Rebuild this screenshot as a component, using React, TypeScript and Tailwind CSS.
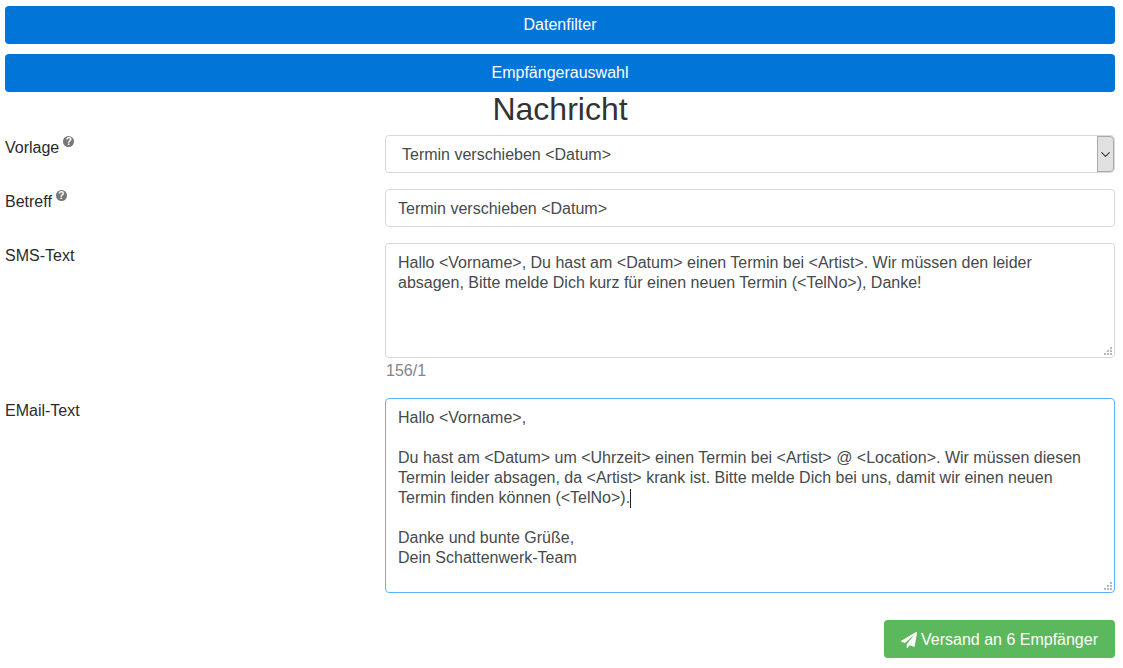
import { ChevronDown } from 'lucide-react';
import type { ReactNode } from 'react';

const SMS_TEXT =
  'Hallo <Vorname>, Du hast am <Datum> einen Termin bei <Artist>. Wir müssen den leider absagen, Bitte melde Dich kurz für einen neuen Termin (<TelNo>), Danke!';

const EMAIL_TEXT = `Hallo <Vorname>,

Du hast am <Datum> um <Uhrzeit> einen Termin bei <Artist> @ <Location>. Wir müssen diesen Termin leider absagen, da <Artist> krank ist. Bitte melde Dich bei uns, damit wir einen neuen Termin finden können (<TelNo>).

Danke und bunte Grüße,
Dein Schattenwerk-Team`;

function Hint() {
  return (
    <span className="ml-[4px] inline-flex h-[11px] w-[11px] -translate-y-[7px] items-center justify-center rounded-full bg-[#767676] align-middle text-[10px] font-bold leading-none text-white">
      ?
    </span>
  );
}

// textarea resize grip, drawn because the native one looks different here
function Grip() {
  return (
    <svg viewBox="0 0 8 8" className="pointer-events-none absolute bottom-[3px] right-[3px] h-[8px] w-[8px]" fill="#b8b8b8">
      <rect x="6" y="0" width="2" height="2" />
      <rect x="3" y="3" width="2" height="2" />
      <rect x="6" y="3" width="2" height="2" />
      <rect x="0" y="6" width="2" height="2" />
      <rect x="3" y="6" width="2" height="2" />
      <rect x="6" y="6" width="2" height="2" />
    </svg>
  );
}

function Row({ label, hint, children }: { label: string; hint?: boolean; children: ReactNode }) {
  return (
    <div className="flex">
      <label className="w-[380px] shrink-0 pt-[3px] leading-[20px] text-[#292b2c]">
        {label}
        {hint && <Hint />}
      </label>
      <div className="min-w-0 flex-1">{children}</div>
    </div>
  );
}

export default function App() {
  return (
    <main className="h-[668px] overflow-hidden bg-white pl-[5px] pr-[8px] pt-[6px] font-['Liberation_Sans',Arial,sans-serif] text-base text-[#292b2c]">
      <button className="block h-[38px] w-full rounded bg-[#0275d8] text-white">Datenfilter</button>
      <button className="mt-[10px] block h-[38px] w-full rounded bg-[#0275d8] text-white">Empfängerauswahl</button>

      <h2 className="h-[43px] text-center text-[32px] leading-[35px] text-[#333]">Nachricht</h2>

      <div className="flex flex-col">
        <Row label="Vorlage" hint>
          <div className="relative h-[38px]">
            <select className="h-full w-full appearance-none rounded border border-[#d9d9d9] bg-white pl-[16px] pr-5 pt-[1px] text-[#464a4c] outline-none">
              <option>Termin verschieben &lt;Datum&gt;</option>
            </select>
            <span className="absolute right-[1px] top-[1px] flex h-[36px] w-[17px] items-center justify-center rounded-r border border-[#a9a9a9] bg-[#e1e1e1]">
              <ChevronDown size={15} strokeWidth={1.75} className="text-[#333]" />
            </span>
          </div>
        </Row>

        <div className="mt-[16px]">
          <Row label="Betreff" hint>
            <input
              readOnly
              value="Termin verschieben <Datum>"
              className="block h-[38px] w-full rounded border border-[#d9d9d9] px-3 pt-[1px] text-[#464a4c] outline-none"
            />
          </Row>
        </div>

        <div className="mt-[16px]">
          <Row label="SMS-Text">
            <div className="relative">
              <textarea
                readOnly
                defaultValue={SMS_TEXT}
                className="block h-[115px] w-full resize-none rounded border border-[#d9d9d9] px-3 pb-2 pt-[9px] leading-[20px] text-[#464a4c] outline-none"
              />
              <Grip />
            </div>
            <p className="ml-[1px] mt-[1px] leading-[24px] text-[#7f858a]">156/1</p>
          </Row>
        </div>

        <div className="mt-[15px]">
          <Row label="EMail-Text">
            <div className="relative">
              <textarea
                readOnly
                defaultValue={EMAIL_TEXT}
                className="block h-[195px] w-full resize-none rounded border border-[#5cb3fd] px-3 pb-2 pt-[9px] leading-[20px] text-[#464a4c] outline-none"
              />
              {/* text caret */}
              <span className="absolute left-[245px] top-[91px] h-[19px] w-px bg-[#222]" />
              <Grip />
            </div>
          </Row>
        </div>
      </div>

      <div className="mt-[27px] flex justify-end">
        <button className="flex h-[38px] w-[231px] items-center justify-center gap-[4px] rounded bg-[#5cb85c] pt-[1px] text-white">
          <svg viewBox="0 0 1792 1792" className="h-[16px] w-[16px]" fill="currentColor">
            <path d="M1764 11q33 24 27 64l-256 1536q-5 29-32 45-14 8-31 8-11 0-24-5l-453-185-242 295q-18 23-49 23-13 0-22-4-19-7-30.5-23.5t-11.5-36.5v-349l864-1059-1069 925-395-162q-37-14-40-55-2-40 32-59l1664-960q15-9 32-9 20 0 36 11z" />
          </svg>
          Versand an 6 Empfänger
        </button>
      </div>
    </main>
  );
}
